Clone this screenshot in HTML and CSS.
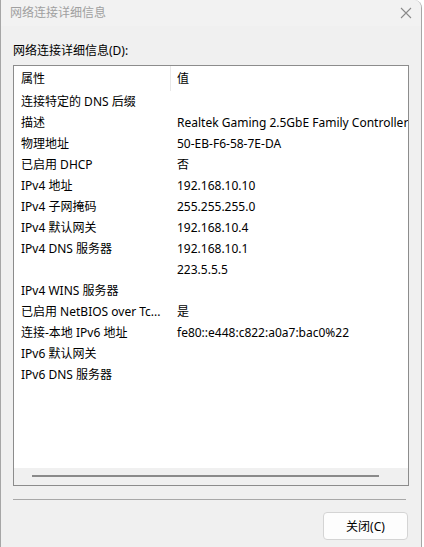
FILE: index.html
```html
<!DOCTYPE html>
<html lang="zh-CN">
<head>
<meta charset="utf-8">
<title>网络连接详细信息</title>
<link rel="stylesheet" href="styles.css">
</head>
<body>
<div class="window">
  <div class="titlebar">
    <span class="title">网络连接详细信息</span>
    <svg class="close" width="12" height="12" viewBox="0 0 12 12"><path d="M1 1L11 11M11 1L1 11" stroke="#8a8a8a" stroke-width="1.1" fill="none"/></svg>
  </div>
  <div class="content">
    <div class="label">网络连接详细信息(D):</div>
    <div class="listbox">
      <div class="header">
        <div class="hcell c1">属性</div>
        <div class="hcell c2">值</div>
      </div>
      <div class="rows">
        <div class="row"><span class="c1">连接特定的 DNS 后缀</span><span class="c2"></span></div>
        <div class="row"><span class="c1">描述</span><span class="c2">Realtek Gaming 2.5GbE Family Controller</span></div>
        <div class="row"><span class="c1">物理地址</span><span class="c2">50-EB-F6-58-7E-DA</span></div>
        <div class="row"><span class="c1">已启用 DHCP</span><span class="c2">否</span></div>
        <div class="row"><span class="c1">IPv4 地址</span><span class="c2">192.168.10.10</span></div>
        <div class="row"><span class="c1">IPv4 子网掩码</span><span class="c2">255.255.255.0</span></div>
        <div class="row"><span class="c1">IPv4 默认网关</span><span class="c2">192.168.10.4</span></div>
        <div class="row"><span class="c1">IPv4 DNS 服务器</span><span class="c2">192.168.10.1</span></div>
        <div class="row"><span class="c1"></span><span class="c2">223.5.5.5</span></div>
        <div class="row"><span class="c1">IPv4 WINS 服务器</span><span class="c2"></span></div>
        <div class="row"><span class="c1">已启用 NetBIOS over Tc...</span><span class="c2">是</span></div>
        <div class="row"><span class="c1">连接-本地 IPv6 地址</span><span class="c2">fe80::e448:c822:a0a7:bac0%22</span></div>
        <div class="row"><span class="c1">IPv6 默认网关</span><span class="c2"></span></div>
        <div class="row"><span class="c1">IPv6 DNS 服务器</span><span class="c2"></span></div>
      </div>
      <div class="hscroll"><div class="thumb"></div></div>
    </div>
    <div class="sep"></div>
    <div class="footer">
      <button class="btn">关闭(C)</button>
    </div>
  </div>
</div>
</body>
</html>
```
FILE: styles.css
```css
html, body {
  margin: 0;
  padding: 0;
  background: #ffffff;
}
body {
  font-family: "Noto Sans", "Noto Sans CJK SC", sans-serif;
  font-size: 12px;
  color: #000;
}
.window {
  width: 422px;
  height: 547px;
  box-sizing: border-box;
  background: #f0f0f0;
  border-left: 1px solid #a6a6a6;
  border-right: 1px solid #a6a6a6;
  border-top-right-radius: 8px;
  display: flex;
  flex-direction: column;
  overflow: hidden;
}
.titlebar {
  height: 26px;
  flex: none;
  display: flex;
  align-items: center;
  justify-content: space-between;
  padding: 0 9px 0 9px;
  background: #f2f2f2;
}
.title {
  color: #a0a0a0;
  font-size: 12px;
  line-height: 16px;
}
.close {
  display: block;
}
.content {
  flex: 1;
  display: flex;
  flex-direction: column;
  padding: 17px 12px 0 12px;
}
.label {
  line-height: 16px;
  height: 16px;
  margin-bottom: 6px;
}
.listbox {
  height: 421px;
  box-sizing: border-box;
  border: 1px solid #8c8c8c;
  background: #fff;
  display: flex;
  flex-direction: column;
  overflow: hidden;
}
.header {
  height: 25px;
  flex: none;
  display: flex;
  align-items: stretch;
}
.hcell {
  line-height: 25px;
  box-sizing: border-box;
}
.c1 {
  width: 157px;
  flex: none;
  padding-left: 7px;
  box-sizing: border-box;
  white-space: nowrap;
  overflow: hidden;
}
.hcell.c1 {
  border-right: 1px solid #e8e8e8;
}
.c2 {
  padding-left: 6px;
  white-space: nowrap;
}
.rows {
  flex: 1;
  overflow: hidden;
}
.row {
  display: flex;
  height: 21px;
  line-height: 21px;
  white-space: nowrap;
}
.hscroll {
  height: 17px;
  flex: none;
  background: #f0f0f0;
  display: flex;
  align-items: center;
  padding: 0 29px 1px 18px;
  box-sizing: border-box;
}
.thumb {
  flex: 1;
  height: 2px;
  background: #8a8a8a;
}
.sep {
  height: 1px;
  background: #a8a8a8;
  margin: 13px 3px 0 0;
}
.footer {
  display: flex;
  justify-content: flex-end;
  padding-top: 12px;
  padding-right: 1px;
}
.btn {
  width: 85px;
  height: 28px;
  font-family: "Noto Sans", "Noto Sans CJK SC", sans-serif;
  font-size: 12px;
  color: #000;
  background: #fdfdfd;
  border: 1px solid #d4d4d4;
  border-radius: 4px;
  padding: 0;
}
```
